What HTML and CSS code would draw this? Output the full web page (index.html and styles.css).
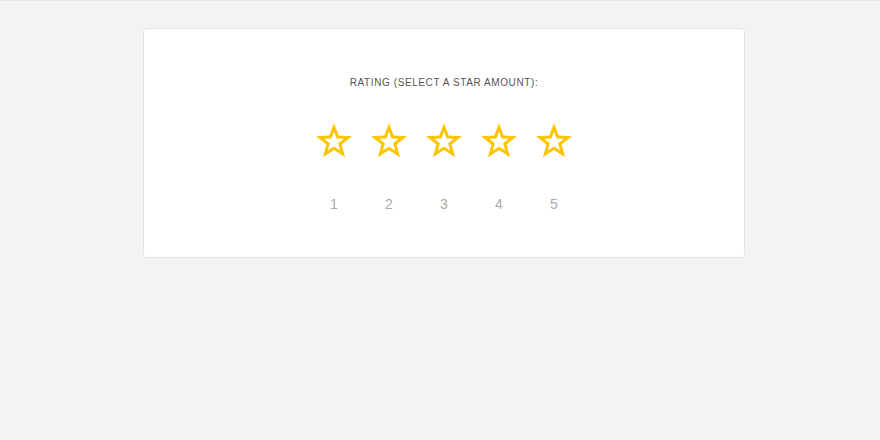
FILE: index.html
```html
<!DOCTYPE html>
<html>
<head>
<meta charset="utf-8">
<link rel="stylesheet" href="styles.css">
</head>
<body>
<div class="card">
  <div class="title">Rating (select a star amount):</div>
  <div class="rating">
    <div class="item"><svg class="star" viewBox="0 0 36 35" width="36" height="35"><path fill-rule="evenodd" d="M18 0.1L22.70 12.53L35.97 13.16L25.61 21.47L29.11 34.29L18 27L6.89 34.29L10.39 21.47L0.03 13.16L13.30 12.53Z M18 8.6L15.41 15.44L8.11 15.79L13.82 20.36L11.89 27.41L18 23.4L24.11 27.41L22.18 20.36L27.89 15.79L20.59 15.44Z"/></svg><span class="num">1</span></div>
    <div class="item"><svg class="star" viewBox="0 0 36 35" width="36" height="35"><path fill-rule="evenodd" d="M18 0.1L22.70 12.53L35.97 13.16L25.61 21.47L29.11 34.29L18 27L6.89 34.29L10.39 21.47L0.03 13.16L13.30 12.53Z M18 8.6L15.41 15.44L8.11 15.79L13.82 20.36L11.89 27.41L18 23.4L24.11 27.41L22.18 20.36L27.89 15.79L20.59 15.44Z"/></svg><span class="num">2</span></div>
    <div class="item"><svg class="star" viewBox="0 0 36 35" width="36" height="35"><path fill-rule="evenodd" d="M18 0.1L22.70 12.53L35.97 13.16L25.61 21.47L29.11 34.29L18 27L6.89 34.29L10.39 21.47L0.03 13.16L13.30 12.53Z M18 8.6L15.41 15.44L8.11 15.79L13.82 20.36L11.89 27.41L18 23.4L24.11 27.41L22.18 20.36L27.89 15.79L20.59 15.44Z"/></svg><span class="num">3</span></div>
    <div class="item"><svg class="star" viewBox="0 0 36 35" width="36" height="35"><path fill-rule="evenodd" d="M18 0.1L22.70 12.53L35.97 13.16L25.61 21.47L29.11 34.29L18 27L6.89 34.29L10.39 21.47L0.03 13.16L13.30 12.53Z M18 8.6L15.41 15.44L8.11 15.79L13.82 20.36L11.89 27.41L18 23.4L24.11 27.41L22.18 20.36L27.89 15.79L20.59 15.44Z"/></svg><span class="num">4</span></div>
    <div class="item"><svg class="star" viewBox="0 0 36 35" width="36" height="35"><path fill-rule="evenodd" d="M18 0.1L22.70 12.53L35.97 13.16L25.61 21.47L29.11 34.29L18 27L6.89 34.29L10.39 21.47L0.03 13.16L13.30 12.53Z M18 8.6L15.41 15.44L8.11 15.79L13.82 20.36L11.89 27.41L18 23.4L24.11 27.41L22.18 20.36L27.89 15.79L20.59 15.44Z"/></svg><span class="num">5</span></div>
  </div>
</div>
</body>
</html>
```

FILE: styles.css
```css
html, body {
  margin: 0;
  padding: 0;
}
body {
  background: #f3f3f3;
  border-top: 1px solid #e6e6e6;
  font-family: "Liberation Sans", Arial, sans-serif;
  height: 439px;
  padding-left: 8px;
}
.card {
  box-sizing: border-box;
  width: 602px;
  height: 230px;
  margin: 27px auto 0;
  background: #fff;
  border: 1px solid #e4e4e4;
  border-radius: 4px;
  padding-top: 48px;
  display: flex;
  flex-direction: column;
  align-items: center;
}
.title {
  font-size: 10px;
  line-height: 12px;
  letter-spacing: 0.6px;
  text-transform: uppercase;
  color: #555555;
}
.rating {
  display: flex;
  margin-top: 34px;
}
.item {
  width: 55px;
  display: flex;
  flex-direction: column;
  align-items: center;
}
.star {
  display: block;
  fill: #fdc500;
}
.num {
  margin-top: 38px;
  font-size: 14px;
  line-height: 16px;
  color: #aaaaaa;
}
```
